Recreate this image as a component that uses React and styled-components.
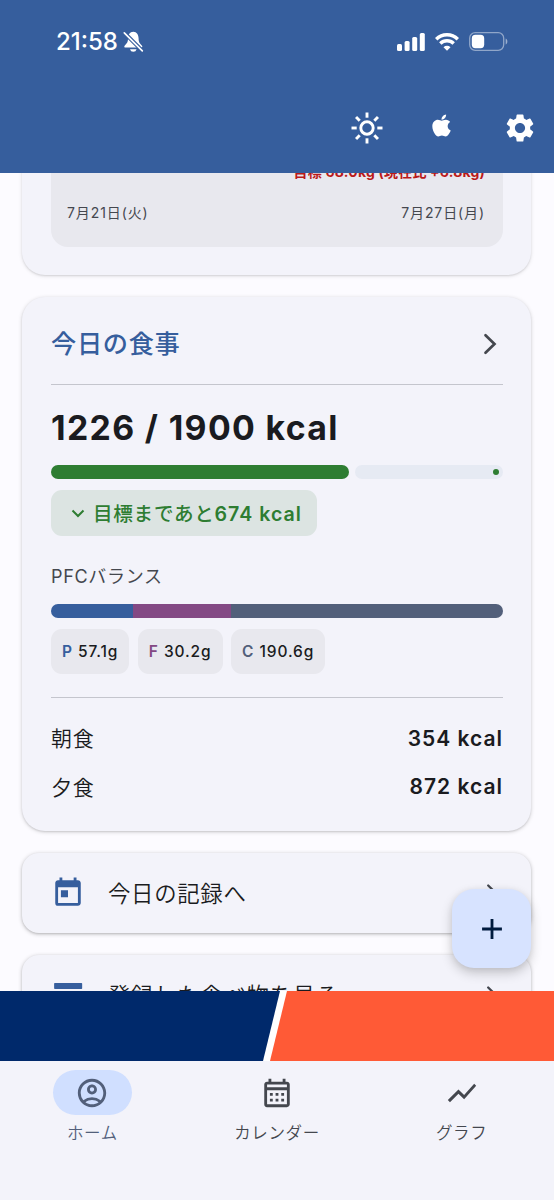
import React from "react";
import styled, { createGlobalStyle, ThemeProvider } from "styled-components";
import {
    MdSettings,
    MdToday,
    MdAdd,
    MdOutlineAccountCircle,
    MdOutlineCalendarMonth,
    MdShowChart
} from "react-icons/md";
import { FaApple } from "react-icons/fa";

const theme = {
    primary: "#365e9d",
    surface: "#f3f3fa",
    panel: "#e8e8ee",
    page: "#fcfbff",
    text: "#1a1b20",
    muted: "#44474e",
    green: "#2e7d32",
    purple: "#834984",
    slate: "#525f7a",
    outline: "#c4c5cd"
};

const GlobalStyle = createGlobalStyle`
    * {
        box-sizing: border-box;
    }
    body {
        margin: 0;
        font-family: Inter, "Noto Sans CJK JP", sans-serif;
        color: ${theme.text};
    }
`
const Screen = styled.div`
    position: relative;
    display: flex;
    flex-direction: column;
    width: 554px;
    height: 1200px;
    overflow: hidden;
    background: ${props => props.theme.page};
`
const Header = styled.header`
    flex: none;
    height: 173px;
    background: ${props => props.theme.primary};
    color: #fff;
`
const StatusBar = styled.div`
    display: flex;
    align-items: center;
    height: 83px;
    padding: 0 46px 0 56px;
`
const Time = styled.span`
    font-size: 24px;
    font-weight: 550;
    line-height: 30px;
    margin-right: 5px;
`
const StatusIcons = styled.div`
    display: flex;
    align-items: center;
    gap: 10px;
    margin-left: auto;
`
const Toolbar = styled.div`
    display: flex;
    align-items: center;
    justify-content: flex-end;
    height: 90px;
`
const ToolButton = styled.button`
    display: flex;
    align-items: center;
    justify-content: center;
    width: ${props => props.$width}px;
    height: 44px;
    padding: 0 0 ${props => props.$lift || 0}px;
    border: 0;
    background: none;
    color: inherit;
`
const Viewport = styled.main`
    flex: none;
    height: 818px;
    padding: 0 23px 0 22px;
    overflow: hidden;
`
// the feed is scrolled past most of the weight card
const Feed = styled.div`
    display: flex;
    flex-direction: column;
    gap: 22px;
    margin-top: -40px;
`
const Card = styled.section`
    flex: none;
    height: ${props => props.$height}px;
    padding: 0 28px 0 29px;
    border-radius: ${props => props.$radius || 23}px;
    background: ${props => props.theme.surface};
    box-shadow: 0 1px 4px rgba(0, 0, 0, ${props => props.$shade || 0.1}), 0 1px 2px rgba(0, 0, 0, 0.1);
`
const ChartPanel = styled.div`
    height: 114px;
    padding: 26px 18px 0 16px;
    border-radius: 0 0 17px 17px;
    background: ${props => props.theme.panel};
`
const Goal = styled.div`
    height: 26px;
    line-height: 26px;
    text-align: right;
    font-size: 14px;
    font-weight: 700;
    letter-spacing: 0.2px;
    color: #ba1a1a;
`
const Dates = styled.div`
    display: flex;
    justify-content: space-between;
    margin-top: 17px;
    font-size: 14px;
    line-height: 22px;
    letter-spacing: 0.9px;
    color: ${props => props.theme.muted};
`
const CardHead = styled.div`
    display: flex;
    align-items: center;
    justify-content: space-between;
    height: 88px;
    padding-top: 6px;
    border-bottom: 1px solid ${props => props.theme.outline};
`
const Title = styled.h2`
    margin: 0;
    font-size: 25.2px;
    font-weight: 500;
    line-height: 34px;
    letter-spacing: 0.7px;
    color: ${props => props.theme.primary};
`
const Total = styled.div`
    height: 80px;
    padding-top: 2px;
    line-height: 82px;
    font-size: 33.8px;
    font-weight: 700;
    letter-spacing: 1.35px;
`
const Progress = styled.div`
    display: flex;
    gap: 6px;
    height: 14px;
`
const Done = styled.div`
    width: ${props => props.$width}px;
    border-radius: 7px;
    background: ${props => props.theme.green};
`
const Rest = styled.div`
    display: flex;
    flex: 1;
    align-items: center;
    justify-content: flex-end;
    padding-right: 4px;
    border-radius: 7px;
    background: #e6eaf3;
    &::after {
        content: "";
        width: 6px;
        height: 6px;
        border-radius: 50%;
        background: ${props => props.theme.green};
    }
`
const Remaining = styled.div`
    display: flex;
    align-items: center;
    width: max-content;
    height: 46px;
    margin-top: 11px;
    padding: 0 15px 0 20px;
    border-radius: 11px;
    background: #dce4e2;
    color: ${props => props.theme.green};
    font-size: 19.6px;
    font-weight: 500;
    letter-spacing: 0.7px;
    white-space: nowrap;
    svg {
        margin-right: 8px;
    }
    span {
        padding-bottom: 2px;
    }
    b {
        font-weight: 600;
        letter-spacing: 1px;
    }
`
const Label = styled.div`
    margin-top: 26px;
    height: 42px;
    line-height: 29px;
    font-size: 18px;
    letter-spacing: 0.7px;
    color: ${props => props.theme.muted};
`
const Balance = styled.div`
    display: flex;
    height: 14px;
    border-radius: 7px;
    overflow: hidden;
`
const Share = styled.div`
    flex: ${props => props.$grow} 0 0;
    background: ${props => props.theme[props.$tone]};
`
const Chips = styled.div`
    display: flex;
    gap: 8.5px;
    height: 80px;
    padding: 11px 0 23px;
    border-bottom: 1px solid ${props => props.theme.outline};
`
const Chip = styled.div`
    padding: 0 11px;
    border-radius: 11px;
    background: ${props => props.theme.panel};
    line-height: 46px;
    font-size: 15.5px;
    font-weight: 500;
    letter-spacing: 0.9px;
    b {
        font-weight: 600;
        color: ${props => props.theme[props.$tone]};
    }
`
const Meals = styled.div`
    padding-top: 16px;
`
const Meal = styled.div`
    display: flex;
    align-items: center;
    justify-content: space-between;
    height: 48.5px;
    font-size: 21px;
    font-weight: 350;
    letter-spacing: 0.7px;
    span {
        margin-top: -2px;
    }
    strong {
        font-weight: 600;
        letter-spacing: 1px;
    }
`
const LinkRow = styled.div`
    display: flex;
    align-items: center;
    height: 80px;
    font-size: 22.4px;
    font-weight: 350;
    letter-spacing: 0.7px;
    color: ${props => props.theme.text};
    > svg:first-child {
        margin-right: 23px;
        color: ${props => props.theme.primary};
    }
    > span {
        padding-bottom: 2px;
    }
    > svg:last-child {
        margin-left: auto;
    }
`
const Fab = styled.button`
    position: absolute;
    top: 889px;
    left: 452px;
    display: flex;
    align-items: center;
    justify-content: center;
    width: 79px;
    height: 79px;
    padding: 0;
    border: 0;
    border-radius: 22px;
    background: #d7e3ff;
    color: #001b3e;
    box-shadow: 0 5px 12px rgba(0, 0, 0, 0.2), 0 1px 6px rgba(0, 0, 0, 0.06);
`
const Banner = styled.div`
    flex: none;
    height: 70px;
    svg {
        display: block;
    }
`
const Nav = styled.nav`
    display: grid;
    grid-template-columns: repeat(3, 1fr);
    flex: 1;
    padding-top: 9px;
    background: ${props => props.theme.surface};
`
const NavItem = styled.div`
    display: flex;
    flex-direction: column;
    align-items: center;
    color: ${props => props.$active ? props.theme.slate : props.theme.muted};
    font-size: 16.5px;
    font-weight: 350;
    line-height: 26px;
    letter-spacing: 0.6px;
`
const Pill = styled.div`
    display: flex;
    align-items: center;
    justify-content: center;
    width: 79px;
    height: 45px;
    margin-bottom: 5px;
    border-radius: 23px;
    background: ${props => props.$active ? "#d0dfff" : "transparent"};
`

const macros = [
    { key: "P", grams: "57.1g", tone: "primary", share: 82 },
    { key: "F", grams: "30.2g", tone: "purple", share: 98 },
    { key: "C", grams: "190.6g", tone: "slate", share: 272 }
];
const meals = [
    { name: "朝食", kcal: 354 },
    { name: "夕食", kcal: 872 }
];

const MutedBell = () => (
    <svg width="21" height="22" viewBox="0 0 21 22">
        <path d="M10.3 0.800C6.800.8 5 3.800 5 7.600c0 3.800-1.200 5-3.200 6.800-1 .9-.5 2.100.8 2.100h15.400c1.300 0 1.800-1.200.8-2.100-2-1.800-3.200-3-3.200-6.800 0-3.800-1.800-6.800-5.300-6.800z" fill="#fff"/>
        <path d="M7 18.200h6.600a3.400 3.400 0 0 1-6.600 0z" fill="#fff"/>
        <path d="M1 1.500l18.700 18.700" stroke="#365e9d" strokeWidth="4"/>
        <path d="M1.300 1.800l18 18" stroke="#fff" strokeWidth="1.700" strokeLinecap="round"/>
    </svg>
);
const Signal = () => (
    <svg width="28" height="18" viewBox="0 0 28 18" fill="#fff">
        <rect x="0" y="11" width="5" height="7" rx="1.500"/>
        <rect x="7.600" y="8" width="5" height="10" rx="1.500"/>
        <rect x="15.200" y="4" width="5" height="14" rx="1.500"/>
        <rect x="22.800" y="0" width="5" height="18" rx="1.500"/>
    </svg>
);
const Wifi = () => (
    <svg width="24" height="18" viewBox="0 0 24 18" fill="none" stroke="#fff" strokeWidth="3.400">
        <path d="M1.200 6.200a15.300 15.300 0 0 1 21.600 0"/>
        <path d="M5.300 10.500a9.500 9.500 0 0 1 13.400 0"/>
        <path d="M12 17.800l-3.500-3.600a5 5 0 0 1 7 0z" fill="#fff" stroke="none"/>
    </svg>
);
const Battery = () => (
    <svg width="39" height="19" viewBox="0 0 39 19">
        <rect x="0.700" y="0.700" width="34" height="17.600" rx="5.500" fill="none" stroke="#fff" strokeOpacity="0.450" strokeWidth="1.300"/>
        <rect x="2.800" y="2.800" width="12.400" height="13.400" rx="3.600" fill="#fff"/>
        <path d="M36.700 6.500c2.200.8 2.200 5.200 0 6z" fill="#fff" opacity="0.500"/>
    </svg>
);
const Sun = () => (
    <svg width="32" height="32" viewBox="0 0 32 32" fill="none" stroke="#fff" strokeWidth="2.900">
        <circle cx="16" cy="16" r="6.200"/>
        {[0, 45, 90, 135, 180, 225, 270, 315].map(angle => (
            <path key={angle} d="M16 .5v5.200" transform={`rotate(${angle} 16 16)`}/>
        ))}
    </svg>
);
const Chevron = ({ size = 26 }) => (
    <svg width={size} height={size} viewBox="0 0 26 26" fill="none" stroke="#44474e" strokeWidth="2.700">
        <path d="M8.500 4.200l9 8.800-9 8.800" strokeLinecap="round"/>
    </svg>
);
const SmallDown = () => (
    <svg width="14" height="9" viewBox="0 0 14 9" fill="none" stroke="currentColor" strokeWidth="2">
        <path d="M1.500 1.500L7 7l5.500-5.500"/>
    </svg>
);
const FoodList = () => (
    <svg width="34" height="34" viewBox="0 0 24 24" fill="currentColor">
        <rect x="2.200" y="3.600" width="19.800" height="4.200" rx="0.500"/>
        <rect x="2.200" y="10" width="19.800" height="4.200" rx="0.500"/>
        <rect x="2.200" y="16.400" width="19.800" height="4.200" rx="0.500"/>
    </svg>
);

class App extends React.Component {
    render(){
        return(
            <ThemeProvider theme={theme}>
                <GlobalStyle/>
                <Screen>
                    <Header>
                        <StatusBar>
                            <Time>21:58</Time>
                            <MutedBell/>
                            <StatusIcons>
                                <Signal/>
                                <Wifi/>
                                <Battery/>
                            </StatusIcons>
                        </StatusBar>
                        <Toolbar>
                            <ToolButton $width={61}><Sun/></ToolButton>
                            <ToolButton $width={89} $lift={5}><FaApple size={25}/></ToolButton>
                            <ToolButton $width={68}><MdSettings size={34}/></ToolButton>
                        </Toolbar>
                    </Header>
                    <Viewport>
                        <Feed>
                            <Card $height={142}>
                                <ChartPanel>
                                    <Goal>目標 68.0kg (現在比 +6.8kg)</Goal>
                                    <Dates>
                                        <span>7月21日(火)</span>
                                        <span>7月27日(月)</span>
                                    </Dates>
                                </ChartPanel>
                            </Card>
                            <Card $height={534} $shade={0.16}>
                                <CardHead>
                                    <Title>今日の食事</Title>
                                    <Chevron/>
                                </CardHead>
                                <Total>1226 / 1900 kcal</Total>
                                <Progress>
                                    <Done $width={298}/>
                                    <Rest/>
                                </Progress>
                                <Remaining>
                                    <SmallDown/>
                                    <span>目標まであと<b>674 kcal</b></span>
                                </Remaining>
                                <Label>PFCバランス</Label>
                                <Balance>
                                    {macros.map(m => <Share key={m.key} $grow={m.share} $tone={m.tone}/>)}
                                </Balance>
                                <Chips>
                                    {macros.map(m => (
                                        <Chip key={m.key} $tone={m.tone}><b>{m.key}</b> {m.grams}</Chip>
                                    ))}
                                </Chips>
                                <Meals>
                                    {meals.map(meal => (
                                        <Meal key={meal.name}>
                                            <span>{meal.name}</span>
                                            <strong>{meal.kcal} kcal</strong>
                                        </Meal>
                                    ))}
                                </Meals>
                            </Card>
                            <Card $height={80} $radius={17} $shade={0.24}>
                                <LinkRow>
                                    <MdToday size={34}/>
                                    <span>今日の記録へ</span>
                                    <Chevron size={22}/>
                                </LinkRow>
                            </Card>
                            <Card $height={80} $radius={17} $shade={0.24}>
                                <LinkRow>
                                    <FoodList/>
                                    <span>登録した食べ物を見る</span>
                                    <Chevron size={22}/>
                                </LinkRow>
                            </Card>
                        </Feed>
                    </Viewport>
                    <Banner>
                        <svg width="554" height="70" viewBox="0 0 554 70">
                            <path d="M0 0h554v70H0z" fill="#fff"/>
                            <path d="M0 0h280l-17 70H0z" fill="#00296b"/>
                            <path d="M287 0h267v70H270z" fill="#ff5a36"/>
                        </svg>
                    </Banner>
                    <Nav>
                        <NavItem $active>
                            <Pill $active><MdOutlineAccountCircle size={34}/></Pill>
                            ホーム
                        </NavItem>
                        <NavItem>
                            <Pill><MdOutlineCalendarMonth size={34}/></Pill>
                            カレンダー
                        </NavItem>
                        <NavItem>
                            <Pill><MdShowChart size={34}/></Pill>
                            グラフ
                        </NavItem>
                    </Nav>
                    <Fab><MdAdd size={34}/></Fab>
                </Screen>
            </ThemeProvider>
        )
    }
}

export default App;
